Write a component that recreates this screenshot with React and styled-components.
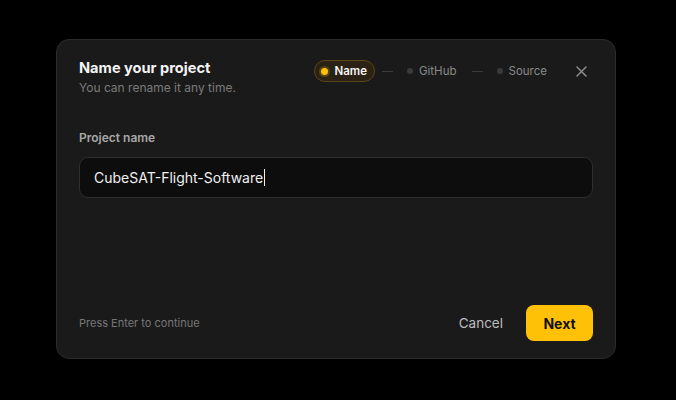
import styled, { createGlobalStyle } from 'styled-components'

const Global = createGlobalStyle`
  html, body { margin: 0; padding: 0; background: #000; }
  body { font-family: Inter, "Noto Sans", sans-serif; -webkit-font-smoothing: antialiased; }
`

const Page = styled.div`
  width: 676px;
  height: 400px;
  display: flex;
  justify-content: flex-start;
  align-items: flex-start;
  padding: 39px 0 0 56px;
  box-sizing: border-box;
`

const Modal = styled.div`
  width: 560px;
  height: 320px;
  box-sizing: border-box;
  background: #1a1a1a;
  border: 1px solid #2b2b2b;
  border-radius: 13px;
  padding: 19px 22px 17px 22px;
  display: flex;
  flex-direction: column;
  box-shadow: 0 10px 40px rgba(0,0,0,0.6);
`

const Header = styled.div`
  display: flex;
  justify-content: space-between;
  align-items: flex-start;
`

const Titles = styled.div`
  display: flex;
  flex-direction: column;
  gap: 2px;
`

const Title = styled.div`
  color: #f4f4f4;
  font-size: 14.6px;
  font-weight: 700;
  line-height: 19px;
`

const Subtitle = styled.div`
  color: #7a7a7a;
  font-size: 12px;
  line-height: 16px;
`

const Steps = styled.div`
  display: flex;
  align-items: center;
  margin-top: 1px;
`

const Step = styled.div`
  display: flex;
  align-items: center;
  gap: 6px;
  height: 22px;
  box-sizing: border-box;
  padding: 0 7px 0 6px;
  border: 1px solid transparent;
  border-radius: 11px;
  font-size: 11.5px;
  color: #8a8a8a;
  ${p => p.$active && `
    background: #2a2214;
    border-color: #5a4716;
    color: #f6f6f6;
    font-weight: 600;
  `}
`

const Dot = styled.span`
  width: 6px;
  height: 6px;
  border-radius: 50%;
  background: #3a3a3a;
  ${p => p.$active && `
    background: #ffc107;
    box-shadow: 0 0 0 2px rgba(255, 193, 7, 0.22);
    width: 7px;
    height: 7px;
  `}
`

const Line = styled.span`
  width: 11px;
  height: 1px;
  background: #3a3a3a;
  margin: 0 7px;
`

const Close = styled.button`
  background: none;
  border: none;
  padding: 0;
  margin-left: 14px;
  width: 24px;
  height: 22px;
  display: flex;
  align-items: center;
  justify-content: center;
  cursor: pointer;
`

const Body = styled.div`
  margin-top: 34px;
  display: flex;
  flex-direction: column;
  gap: 11px;
  flex: 1;
`

const Label = styled.div`
  color: #a8a8a8;
  font-size: 12px;
  font-weight: 600;
  line-height: 16px;
`

const InputBox = styled.div`
  height: 41px;
  box-sizing: border-box;
  background: #0d0d0d;
  border: 1px solid #2e2e2e;
  border-radius: 9px;
  display: flex;
  align-items: center;
  padding: 0 14px;
  color: #f0f0f0;
  font-size: 14px;
`

const Caret = styled.span`
  display: inline-block;
  width: 1px;
  height: 17px;
  background: #f0f0f0;
  margin-left: 1px;
`

const Footer = styled.div`
  display: flex;
  align-items: center;
  justify-content: space-between;
`

const Hint = styled.div`
  color: #777;
  font-size: 11px;
`

const Actions = styled.div`
  display: flex;
  align-items: center;
  gap: 23px;
`

const Ghost = styled.button`
  background: none;
  border: none;
  color: #bdbdbd;
  font-family: inherit;
  font-size: 13.5px;
  padding: 0;
  cursor: pointer;
`

const Primary = styled.button`
  background: #ffc107;
  border: none;
  border-radius: 8px;
  width: 67px;
  height: 36px;
  color: #111;
  font-family: inherit;
  font-size: 14px;
  font-weight: 700;
  cursor: pointer;
`

const steps = ['Name', 'GitHub', 'Source']

export default function App() {
  return (
    <>
      <Global />
      <Page>
        <Modal>
          <Header>
            <Titles>
              <Title>Name your project</Title>
              <Subtitle>You can rename it any time.</Subtitle>
            </Titles>
            <Steps>
              {steps.map((s, i) => (
                <div key={s} style={{ display: 'contents' }}>
                  {i > 0 && <Line />}
                  <Step $active={i === 0}>
                    <Dot $active={i === 0} />
                    {s}
                  </Step>
                </div>
              ))}
              <Close aria-label="Close">
                <svg width="11" height="11" viewBox="0 0 11 11">
                  <path d="M1 1L10 10M10 1L1 10" stroke="#8c8c8c" strokeWidth="1.5" strokeLinecap="round" />
                </svg>
              </Close>
            </Steps>
          </Header>
          <Body>
            <Label>Project name</Label>
            <InputBox>CubeSAT-Flight-Software<Caret /></InputBox>
          </Body>
          <Footer>
            <Hint>Press Enter to continue</Hint>
            <Actions>
              <Ghost>Cancel</Ghost>
              <Primary>Next</Primary>
            </Actions>
          </Footer>
        </Modal>
      </Page>
    </>
  )
}
